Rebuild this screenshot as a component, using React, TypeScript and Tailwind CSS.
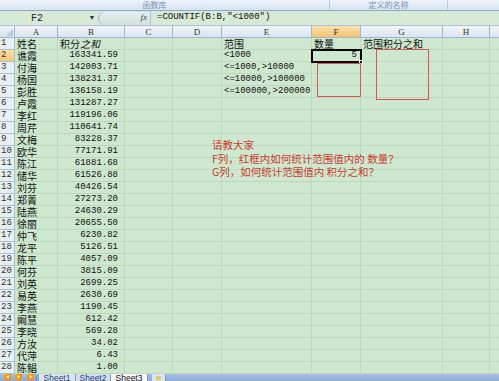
import React from "react";

const COLS = [
  { key: "A", w: 43 },
  { key: "B", w: 67 },
  { key: "C", w: 48 },
  { key: "D", w: 49 },
  { key: "E", w: 90 },
  { key: "F", w: 49 },
  { key: "G", w: 82 },
  { key: "H", w: 47 },
  { key: "I", w: 40 },
];

const people: [string, string][] = [
  ["谯霞", "163341.59"],
  ["付海", "142003.71"],
  ["杨国", "138231.37"],
  ["彭胜", "136158.19"],
  ["卢霞", "131287.27"],
  ["李红", "119196.06"],
  ["周芹", "110641.74"],
  ["文梅", "83228.37"],
  ["欧华", "77171.91"],
  ["陈江", "61881.68"],
  ["储华", "61526.88"],
  ["刘芬", "40426.54"],
  ["郑菁", "27273.20"],
  ["陆燕", "24630.29"],
  ["徐丽", "20655.50"],
  ["仲飞", "6230.82"],
  ["龙平", "5126.51"],
  ["陈平", "4057.09"],
  ["何芬", "3815.09"],
  ["刘英", "2699.25"],
  ["易英", "2630.69"],
  ["李燕", "1190.45"],
  ["阚慧", "612.42"],
  ["李晓", "569.28"],
  ["方汝", "34.02"],
  ["代萍", "6.43"],
  ["陈鲳", "1.00"],
];

const ranges = ["<1000", "<=1000,>10000", "<=10000,>100000", "<=100000,>200000"];

const cjk = "font-['Noto_Sans_CJK_SC',sans-serif]";
const mono = "font-['Liberation_Mono','Noto_Sans_CJK_SC',monospace]";

function Row({ n }: { n: number }) {
  const p = n >= 2 ? people[n - 2] : null;
  const cells: Record<string, React.ReactNode> = {};
  if (n === 1) {
    cells.A = <span className={`${cjk} text-[10px] leading-[11px] pl-[2px]`}>姓名</span>;
    cells.B = <span className={`${cjk} text-[10px] leading-[11px] pl-[2px]`}>积分<i>之和</i></span>;
    cells.E = <span className={`${cjk} text-[10px] leading-[11px] pl-[2px]`}>范围</span>;
    cells.F = <span className={`${cjk} text-[10px] leading-[11px] pl-[2px] whitespace-nowrap`}>数量</span>;
    cells.G = <span className={`${cjk} text-[10px] leading-[11px] pl-[2px] whitespace-nowrap`}>范围积分之和</span>;
  } else if (p) {
    cells.A = <span className={`${cjk} text-[10px] leading-[11px] pl-[2px]`}>{p[0]}</span>;
    cells.B = <span className={`${mono} text-[9px] leading-[11px] ml-auto pr-[6px]`}>{p[1]}</span>;
  }
  if (n >= 2 && n <= 5) {
    cells.E = <span className={`${mono} text-[9px] leading-[11px] pl-[2px] whitespace-nowrap`}>{ranges[n - 2]}</span>;
  }
  if (n === 2) {
    cells.F = <span className={`${mono} text-[9px] leading-[11px] ml-auto pr-[3px]`}>5</span>;
  }
  return (
    <div className="flex h-[12px]">
      <div
        className={`w-[15px] shrink-0 flex items-center pl-[1px] border-r border-b border-[#a9bfd6] text-[9px] leading-[11px] ${mono} text-[#333] ${
          n === 2 ? "bg-gradient-to-b from-[#fbe0a6] to-[#f4c66f]" : "bg-[#e8eff0]"
        }`}
      >
        {n}
      </div>
      {COLS.map((c) => (
        <div
          key={c.key}
          style={{ width: c.w }}
          className="shrink-0 flex items-center border-r border-b border-[#bcd8be] text-[#111]"
        >
          {cells[c.key]}
        </div>
      ))}
    </div>
  );
}

export default function App() {
  const rows = Array.from({ length: 28 }, (_, i) => i + 1);
  return (
    <div className="w-[499px] h-[381px] overflow-hidden flex flex-col bg-[#cde8cf] select-none">
      {/* ribbon strip */}
      <div className="h-[10px] flex bg-gradient-to-b from-[#eef3fa] to-[#d6e3f2] text-[8px] text-[#7b93b8] leading-[10px] font-['Noto_Sans_CJK_SC',sans-serif] overflow-hidden">
        <div className="w-[330px] flex justify-center pr-[20px] border-r border-[#b7c9e0]">
          <span>函数库</span>
        </div>
        <div className="w-[118px] flex justify-center border-r border-[#b7c9e0]">
          <span>定义的名称</span>
        </div>
      </div>
      <div className="h-[1px] bg-[#8fa9cc]" />

      {/* formula bar */}
      <div className="h-[15px] flex items-center bg-[#d6ead6] border-b border-[#a9c2dd]">
        <div className={`w-[74px] text-center ${mono} text-[10px] text-[#222]`}>F2</div>
        <div className="w-[12px]" />
        <div className="w-[12px] text-[7px] text-[#333] text-center">▼</div>
        <div className="w-[52px] h-[13px] flex items-center justify-end pr-[3px] rounded-l-full border-l border-[#9fb3cc] bg-gradient-to-b from-[#e4ecf3] to-[#d3e2d6]">
          <span className="text-[9px] italic font-['Liberation_Serif',serif] text-[#444]">fx</span>
        </div>
        <div className={`flex-1 h-full flex items-center pl-[6px] border-l border-[#a9c2dd] ${mono} text-[9px] text-[#111]`}>
          =COUNTIF(B:B,"&lt;1000")
        </div>
      </div>

      {/* column headers */}
      <div className="h-[12px] flex">
        <div className="w-[15px] shrink-0 bg-gradient-to-b from-[#eef2f8] to-[#d8e2ee] border-r border-b border-[#9fb6d2] relative">
          <div className="absolute right-[1px] bottom-[1px] w-0 h-0 border-l-[7px] border-l-transparent border-b-[7px] border-b-[#b9c9dc]" />
        </div>
        {COLS.map((c) => (
          <div
            key={c.key}
            style={{ width: c.w }}
            className={`shrink-0 flex items-center justify-center border-r border-b border-[#9fb6d2] text-[9px] leading-[10px] text-[#333] font-['Liberation_Serif',serif] ${
              c.key === "F"
                ? "bg-gradient-to-b from-[#fbe2ad] to-[#f3c26a]"
                : "bg-gradient-to-b from-[#f1f5fa] to-[#dbe4ef]"
            }`}
          >
            {c.key === "I" ? "" : c.key}
          </div>
        ))}
      </div>

      {/* grid */}
      <div className="flex-1 relative overflow-hidden">
        {rows.map((n) => (
          <Row key={n} n={n} />
        ))}

        {/* selected cell F2 */}
        <div className="absolute left-[311px] top-[11px] w-[51px] h-[14px] border-2 border-black" />
        <div className="absolute left-[359px] top-[22px] w-[4px] h-[4px] bg-black border border-white" />

        {/* red boxes */}
        <div className="absolute left-[317px] top-[25px] w-[44px] h-[34px] border border-[#d9574f]" />
        <div className="absolute left-[376px] top-[11px] w-[53px] h-[51px] border border-[#d9574f]" />

        {/* question text box */}
        <div className={`absolute left-[212px] top-[100px] ${cjk} text-[10.5px] leading-[13.5px] text-[#cc3b33] whitespace-nowrap`}>
          <div>请教大家</div>
          <div>F列，红框内如何统计范围值内的 数量？</div>
          <div>G列，如何统计范围值内 积分之和？</div>
        </div>
      </div>

      {/* sheet tabs */}
      <div className="h-[7px] flex items-start bg-gradient-to-b from-[#a9c1e3] to-[#8eaad6] overflow-hidden">
        <div className="w-[38px] flex gap-[4px] pl-[4px] text-[6px] leading-[7px] text-[#1e3d74]">
          <span>◀</span>
          <span>▶</span>
          <span>▶|</span>
        </div>
        <div className="flex h-[7px] leading-[9px] text-[8.5px] font-['Liberation_Sans',sans-serif] text-[#1f3f78]">
          <div className="w-[37px] text-center bg-[#dbe5f2] border-l border-[#7f9cc6]">Sheet1</div>
          <div className="w-[35px] text-center bg-[#d3dfee] border-l border-[#7f9cc6]">Sheet2</div>
          <div className="w-[38px] text-center bg-[#f6f8fb] border-l border-r border-[#7f9cc6] text-[#111]">Sheet3</div>
          <div className="w-[14px] ml-[4px] bg-[#dbe5f2] border-r border-[#7f9cc6] flex items-start justify-center">
            <span className="w-[5px] h-[4px] mt-[2px] bg-[#e9c86a]" />
          </div>
        </div>
      </div>
    </div>
  );
}
